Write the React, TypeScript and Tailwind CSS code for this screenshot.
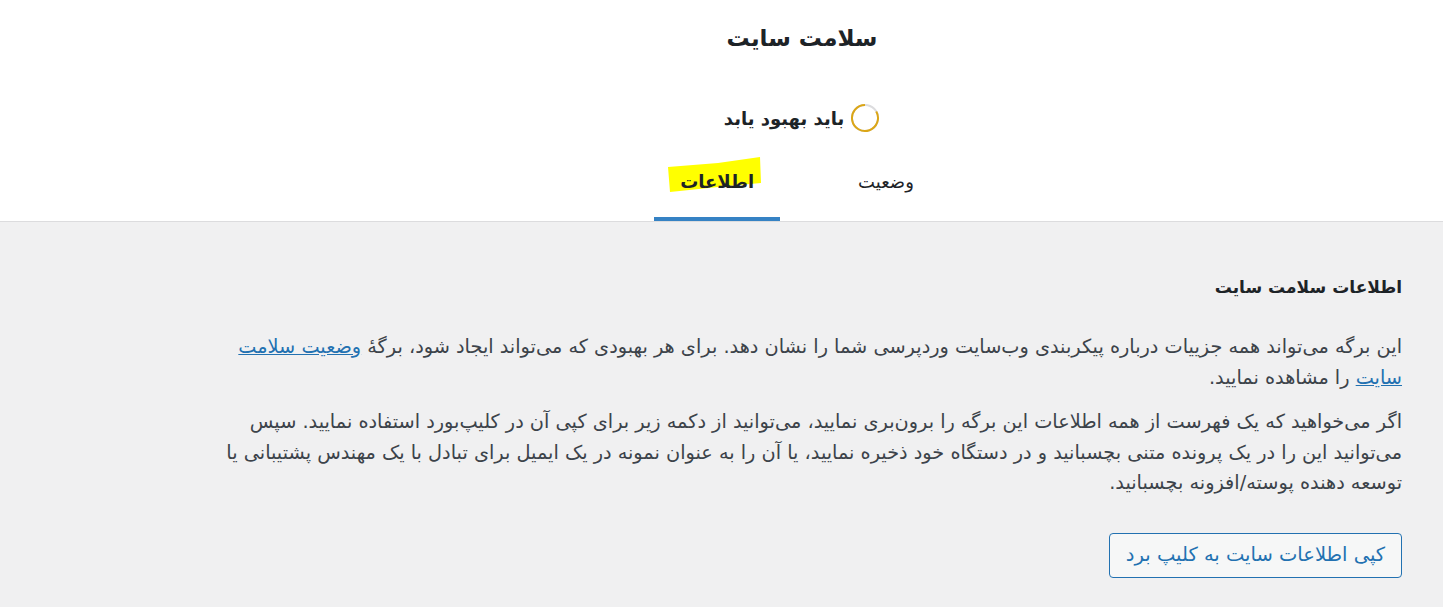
import React from "react";

const font = { fontFamily: '"DejaVu Sans", Tahoma, sans-serif' };

function StatusCircle() {
  return (
    <svg width="30" height="30" viewBox="0 0 30 30" className="shrink-0">
      <circle cx="15" cy="15" r="13" fill="none" stroke="#dcdcde" strokeWidth="2" />
      <path d="M 26.26 8.5 A 13 13 0 1 1 15 2" fill="none" stroke="#dba617" strokeWidth="2" />
    </svg>
  );
}

export default function App() {
  return (
    <div dir="rtl" className="w-[1443px] h-[607px] overflow-hidden bg-[#f0f0f1] text-[#3c434a]" style={font}>
      <header className="bg-white border-b border-[#dcdcde] h-[222px] pl-[161px]">
        <div className="flex flex-col items-center">
          <h1 className="mt-[18px] text-[23px] leading-[40px] font-bold text-[#1d2327]">سلامت سایت</h1>
          <div className="mt-[40px] flex items-center gap-[6px] h-[40px]">
            <StatusCircle />
            <span className="text-[18px] font-bold text-[#1d2327]">باید بهبود یابد</span>
          </div>
          <nav className="mt-[17px] flex items-end -ml-[10px]">
            <a className="mx-[26px] px-[26px] pt-[14px] pb-[22px] text-[18px] leading-[26px] text-[#1d2327] border-b-4 border-transparent">
              وضعیت
            </a>
            <a className="relative mx-[26px] px-[26px] pt-[14px] pb-[22px] text-[18px] leading-[26px] font-bold text-[#1d2327] border-b-4 border-[#3582c4]">
              <svg className="absolute left-[14px] top-[2px]" width="94" height="36" viewBox="0 0 94 36">
                <polygon points="0,10 50,6 92,0 93,26 60,29 2,35" fill="#ffff00" />
              </svg>
              <span className="relative">اطلاعات</span>
            </a>
          </nav>
        </div>
      </header>
      <main className="pr-[41px] pl-[205px] pt-[50px]">
        <h2 className="text-[17px] leading-[30px] font-bold text-[#1d2327]">اطلاعات سلامت سایت</h2>
        <p className="mt-[30px] text-[19.3px] leading-[30.5px]">
          این برگه می‌تواند همه جزییات درباره پیکربندی وب‌سایت وردپرسی شما را نشان دهد. برای هر بهبودی که می‌تواند ایجاد شود، برگهٔ{" "}
          <a className="text-[#2271b1] underline">وضعیت سلامت سایت</a> را مشاهده نمایید.
        </p>
        <p className="mt-[14px] text-[19.3px] leading-[30.5px]">
          اگر می‌خواهید که یک فهرست از همه اطلاعات این برگه را برون‌بری نمایید، می‌توانید از دکمه زیر برای کپی آن در کلیپ‌بورد استفاده نمایید. سپس می‌توانید این را در یک پرونده متنی بچسبانید و در دستگاه خود ذخیره نمایید، یا آن را به عنوان نمونه در یک ایمیل برای تبادل با یک مهندس پشتیبانی یا توسعه دهنده پوسته/افزونه بچسبانید.
        </p>
        <div className="mt-[34px] flex">
          <button className="h-[45px] w-[293px] rounded-[4px] border border-[#2271b1] bg-[#f6f7f7] text-[#2271b1] text-[19.5px]" style={font}>
            کپی اطلاعات سایت به کلیپ برد
          </button>
        </div>
      </main>
    </div>
  );
}
